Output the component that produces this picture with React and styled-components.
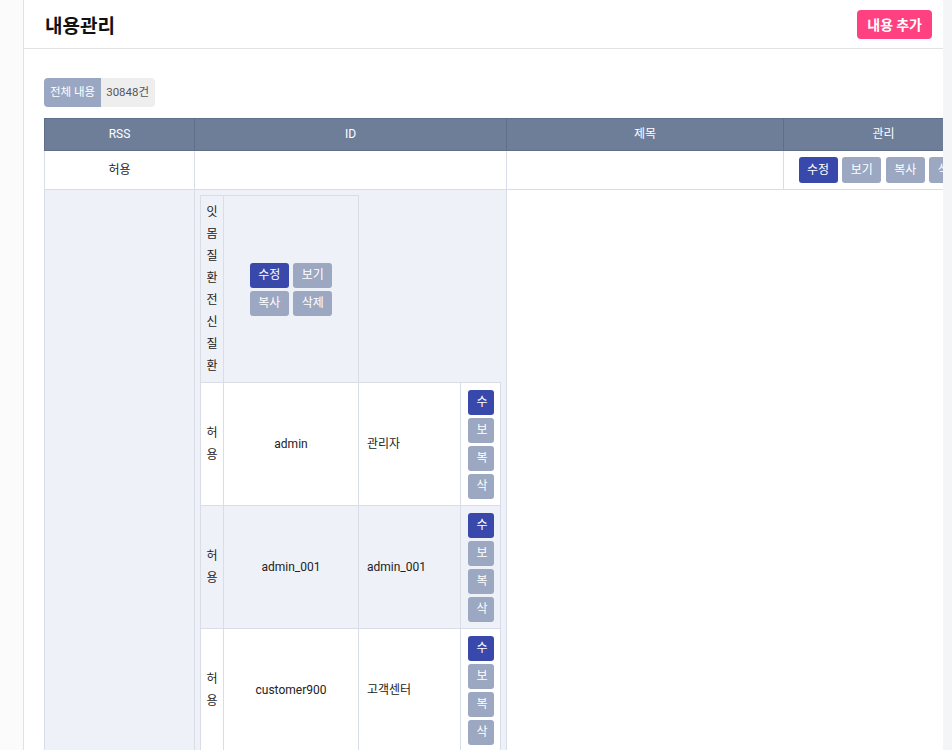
import styled, { createGlobalStyle } from "styled-components";

const ACTIONS = ["수정", "보기", "복사", "삭제"];

const members = [
  { rss: "허용", id: "admin", title: "관리자" },
  { rss: "허용", id: "admin_001", title: "admin_001" },
  { rss: "허용", id: "customer900", title: "고객센터" },
  { rss: "허용", id: "manager02", title: "운영팀" },
];

const ActionButtons = ({ small }) => (
  <ButtonGroup>
    {ACTIONS.map((label, i) => (
      <ActionButton key={label} $primary={i === 0} $small={small}>
        {label}
      </ActionButton>
    ))}
  </ButtonGroup>
);

const App = () => {
  return (
    <>
      <GlobalStyle />
      <Page>
        <Rail />
        <Panel>
          <TopBar>
            <Title>내용관리</Title>
            <AddButton>내용 추가</AddButton>
          </TopBar>
          <Content>
            <Badge>
              <BadgeLabel>전체 내용</BadgeLabel>
              <BadgeCount>30848건</BadgeCount>
            </Badge>
            <Table>
              <colgroup>
                <col style={{ width: 150 }} />
                <col style={{ width: 312 }} />
                <col style={{ width: 277 }} />
                <col style={{ width: 200 }} />
              </colgroup>
              <thead>
                <tr>
                  <Th>RSS</Th>
                  <Th>ID</Th>
                  <Th>제목</Th>
                  <Th>관리</Th>
                </tr>
              </thead>
              <tbody>
                <tr>
                  <Td>허용</Td>
                  <Td />
                  <Td />
                  <Td>
                    <ActionButtons />
                  </Td>
                </tr>
                <tr>
                  <Td $light />
                  <Td $light $nest>
                    <NestedTable>
                      <colgroup>
                        <col style={{ width: 23 }} />
                        <col style={{ width: 135 }} />
                        <col style={{ width: 102 }} />
                        <col style={{ width: 40 }} />
                      </colgroup>
                      <tbody>
                        <tr>
                          <NCell $light>잇몸질환전신질환</NCell>
                          <NCell $light $wide>
                            <ActionButtons small />
                          </NCell>
                        </tr>
                        {members.map((m, i) => (
                          <tr key={m.id}>
                            <NCell $light={i % 2 === 1}>{m.rss}</NCell>
                            <NCell $light={i % 2 === 1}>{m.id}</NCell>
                            <NCell $light={i % 2 === 1} $left>
                              {m.title}
                            </NCell>
                            <ActionCell $light={i % 2 === 1}>
                              <ActionButtons small />
                            </ActionCell>
                          </tr>
                        ))}
                      </tbody>
                    </NestedTable>
                  </Td>
                </tr>
              </tbody>
            </Table>
          </Content>
        </Panel>
      </Page>
    </>
  );
};

export default App;

const GlobalStyle = createGlobalStyle`
  body {
    margin: 0;
    background: #f4f5f7;
    font-family: Roboto, "Noto Sans CJK KR", sans-serif;
    color: #222;
  }
`;

const Page = styled.div`
  display: flex;
  min-height: 100vh;
`;

const Rail = styled.div`
  width: 23px;
  flex-shrink: 0;
  background: #fbfbfb;
  border-right: 1px solid #e2e2e2;
`;

const Panel = styled.main`
  width: 919px;
  flex-shrink: 0;
  background: #fff;
  overflow: hidden;
`;

const TopBar = styled.header`
  height: 48px;
  border-bottom: 1px solid #e2e2e2;
  display: flex;
  align-items: center;
  justify-content: space-between;
  padding: 0 11px 0 21px;
`;

const Title = styled.h1`
  margin: 0;
  font-family: "Noto Sans CJK KR", sans-serif;
  font-size: 19px;
  font-weight: 700;
  color: #111;
`;

const AddButton = styled.button`
  height: 29px;
  padding: 0 10px;
  border: none;
  border-radius: 4px;
  background: #ff4081;
  color: #fff;
  font-family: "Noto Sans CJK KR", sans-serif;
  font-size: 14px;
  font-weight: 700;
`;

const Content = styled.div`
  display: flex;
  flex-direction: column;
  align-items: flex-start;
  padding: 29px 20px 0;
`;

const Badge = styled.div`
  display: flex;
  height: 29px;
  line-height: 29px;
  border-radius: 4px;
  overflow: hidden;
  font-size: 11.5px;
  margin-bottom: 11px;
`;

const BadgeLabel = styled.span`
  padding: 0 6px;
  background: #9aa7c3;
  color: #fff;
`;

const BadgeCount = styled.span`
  padding: 0 6px 0 5px;
  background: #eeeeee;
  color: #555;
`;

const Table = styled.table`
  table-layout: fixed;
  border-collapse: collapse;
  width: 939px;
  flex-shrink: 0;
  font-size: 12px;
`;

const Th = styled.th`
  padding: 7px 8px;
  line-height: 17px;
  background: #6e7e99;
  color: #fff;
  font-weight: 400;
  border: 1px solid #5f6f8a;
`;

const Td = styled.td`
  border: 1px solid #d8dde7;
  padding: ${({ $nest }) => ($nest ? "5px" : "6px 8px")};
  text-align: center;
  vertical-align: ${({ $nest }) => ($nest ? "top" : "middle")};
  line-height: 22px;
  background: ${({ $light }) => ($light ? "#eef1f8" : "#fff")};
`;

const NestedTable = styled.table`
  table-layout: fixed;
  border-collapse: collapse;
  width: 300px;
  font-size: 12px;
`;

const NCell = styled.td`
  border: 1px solid #d8dde7;
  padding: ${({ $left, $wide }) => ($left || $wide ? "5px 8px" : "5px")};
  text-align: ${({ $left }) => ($left ? "left" : "center")};
  vertical-align: middle;
  line-height: 22px;
  word-break: break-all;
  background: ${({ $light }) => ($light ? "#eef1f8" : "#fff")};
`;

const ActionCell = styled(NCell)`
  padding: 7px 6px 6px 7px;
`;

const ButtonGroup = styled.div`
  display: flex;
  flex-wrap: wrap;
  justify-content: center;
  gap: 3px 4.5px;
`;

const ActionButton = styled.button`
  min-width: 0;
  height: ${({ $small }) => ($small ? "25px" : "26px")};
  line-height: ${({ $small }) => ($small ? "25px" : "26px")};
  padding: 0 8.5px;
  border: none;
  border-radius: 3px;
  overflow: hidden;
  font-family: inherit;
  font-size: 12px;
  color: #fff;
  background: ${({ $primary }) => ($primary ? "#3949ab" : "#9ca7c2")};
`;
